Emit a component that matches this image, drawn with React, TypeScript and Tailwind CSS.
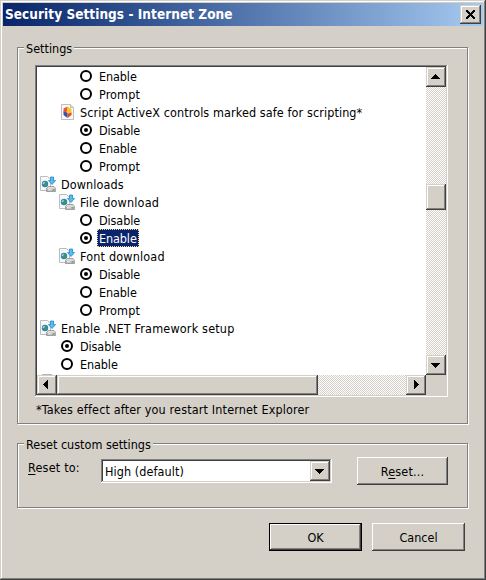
import type { ReactNode } from "react";

const FACE = "bg-[#d4d0c8]";
const RAISED =
  "bg-[#d4d0c8] shadow-[inset_-1px_-1px_0_#404040,inset_1px_1px_0_#d4d0c8,inset_-2px_-2px_0_#808080,inset_2px_2px_0_#fff]";
const BUTTON =
  "bg-[#d4d0c8] shadow-[inset_-1px_-1px_0_#404040,inset_1px_1px_0_#fff,inset_-2px_-2px_0_#808080]";
const SUNKEN =
  "shadow-[inset_-1px_-1px_0_#fff,inset_1px_1px_0_#808080,inset_-2px_-2px_0_#d4d0c8,inset_2px_2px_0_#404040] p-[2px]";
const TRACK =
  "bg-[conic-gradient(#fff_25%,#d4d0c8_0_50%,#fff_0_75%,#d4d0c8_0)] bg-[size:2px_2px]";

type Dir = "up" | "down" | "left" | "right";
const ARROWS: Record<Dir, string> = {
  up: "M9 7h1v1h1v1h1v1h1v1h1v1H5v-1h1v-1h1V9h1V8h1z",
  down: "M5 8h9v1h-1v1h-1v1h-1v1h-1v1H9v-1H8v-1H7v-1H6V9H5z",
  left: "M11 5v9h-1v-1H9v-1H8v-1H7v-1H6V9h1V8h1V7h1V6h1V5z",
  right: "M8 5v9h1v-1h1v-1h1v-1h1v-1h1V9h-1V8h-1V7h-1V6H9V5z",
};

function ArrowButton({ dir }: { dir: Dir }) {
  return (
    <button className={`block size-5 shrink-0 ${RAISED}`} aria-label={dir}>
      <svg width="20" height="20" viewBox="0 0 20 20" shapeRendering="crispEdges">
        <path d={ARROWS[dir]} />
      </svg>
    </button>
  );
}

function Radio({ on }: { on?: boolean }) {
  return (
    <svg className="shrink-0" width="12" height="12" viewBox="0 0 12 12">
      <circle cx="6" cy="6" r="5" fill="#fff" stroke="#000" strokeWidth="2" />
      {on && <circle cx="6" cy="6" r="2" />}
    </svg>
  );
}

function DownloadIcon() {
  return (
    <svg className="shrink-0" width="16" height="16" viewBox="0 0 16 16">
      <path d="M.5.5h7l3 3v11H.5z" fill="#f8f8f8" stroke="#bdbdbd" />
      <circle cx="5" cy="8" r="3.200" fill="#2e7fc4" />
      <path d="M3.500 6.500 6 6l.5 2.500L5 11 4 9zM6.500 8l1.500-.5-.8 2.500z" fill="#3da044" />
      <path d="M2.500 7.200 4.500 5.500 4.800 7 3 8.500z" fill="#a8dcf3" />
      <path d="M10.500 1h3v3.500h2L12 8.500l-3.500-4h2z" fill="#55bdf0" stroke="#2686c5" strokeWidth=".8" />
      <path d="M6.500 12.500 8.500 10.500h5.500l1.500 2v3h-9z" fill="#dedede" stroke="#8a8a8a" strokeWidth=".8" />
      <path d="M7 12.800h8.500v2.200H7z" fill="#b4b5b4" />
      <path d="M8 13.300h3.500v1H8z" fill="#f2f2f2" />
      <path d="M13 13.200h1.500v1.200H13z" fill="#4cb450" />
    </svg>
  );
}

function ActiveXIcon() {
  return (
    <svg className="shrink-0" width="13" height="16" viewBox="0 0 13 16">
      <path d="M.5.5h9l3 3v12H.5z" fill="#fafafa" stroke="#bdbdbd" />
      <path d="M9.500.5v3h3" fill="#e2e2e2" stroke="#bdbdbd" />
      <path d="M6.500 2.500 2.500 4.500v4l4 1z" fill="#e5583a" />
      <path d="m6.500 2.500 4 2.500v4.500l-4 .5-1-2z" fill="#fcc42a" />
      <path d="m2.500 7.500 4 1.500v5l-4-3z" fill="#2d55b8" />
      <path d="m10.500 8.500-4 1.500v4l4-3z" fill="#e2452f" />
    </svg>
  );
}

type Row = {
  text: string;
  level: 0 | 1 | 2;
  kind: "radio" | "on" | "download" | "activex";
  tracking: string;
  selected?: boolean;
};

const TIGHT = "tracking-[-0.1px]";
const MEDIUM = "tracking-[0.1px]";
const WIDE = "tracking-[0.18px]";

const ROWS: Row[] = [
  { text: "Enable", level: 2, kind: "radio", tracking: TIGHT },
  { text: "Prompt", level: 2, kind: "radio", tracking: MEDIUM },
  { text: "Script ActiveX controls marked safe for scripting*", level: 1, kind: "activex", tracking: MEDIUM },
  { text: "Disable", level: 2, kind: "on", tracking: TIGHT },
  { text: "Enable", level: 2, kind: "radio", tracking: TIGHT },
  { text: "Prompt", level: 2, kind: "radio", tracking: MEDIUM },
  { text: "Downloads", level: 0, kind: "download", tracking: MEDIUM },
  { text: "File download", level: 1, kind: "download", tracking: WIDE },
  { text: "Disable", level: 2, kind: "radio", tracking: TIGHT },
  { text: "Enable", level: 2, kind: "on", selected: true, tracking: TIGHT },
  { text: "Font download", level: 1, kind: "download", tracking: WIDE },
  { text: "Disable", level: 2, kind: "on", tracking: TIGHT },
  { text: "Enable", level: 2, kind: "radio", tracking: TIGHT },
  { text: "Prompt", level: 2, kind: "radio", tracking: MEDIUM },
  { text: "Enable .NET Framework setup", level: 0, kind: "download", tracking: WIDE },
  { text: "Disable", level: 1, kind: "on", tracking: TIGHT },
  { text: "Enable", level: 1, kind: "radio", tracking: TIGHT },
];

const INDENT = { 0: "pl-[3px]", 1: "pl-[22px]", 2: "pl-[41px]" };

function TreeRow({ row }: { row: Row }) {
  return (
    <div className={`flex h-[18px] items-center ${INDENT[row.level]}`}>
      <span className="flex w-[19px] shrink-0">
        {row.kind === "download" && <DownloadIcon />}
        {row.kind === "activex" && <span className="pl-[2px]"><ActiveXIcon /></span>}
        {(row.kind === "radio" || row.kind === "on") && (
          <span className="pl-[2px]"><Radio on={row.kind === "on"} /></span>
        )}
      </span>
      <span
        className={`h-[18px] px-[2px] leading-[19px] whitespace-pre ${row.tracking} ${
          row.selected ? "bg-[#0a246a] text-white outline-1 -outline-offset-1 outline-dotted outline-[#f5db95]" : ""
        }`}
      >
        {row.text}
      </span>
    </div>
  );
}

function Group({ title, className, children }: { title: string; className: string; children: ReactNode }) {
  return (
    <section
      className={`border border-[#808080] shadow-[1px_1px_0_#fff,inset_1px_1px_0_#fff] ${className}`}
    >
      <h2 className={`-mt-[8px] ml-[6px] h-4 w-fit pl-[2px] pr-[2px] leading-[17px] whitespace-pre ${FACE}`}>
        {title}
      </h2>
      {children}
    </section>
  );
}

export default function App() {
  return (
    <div className="h-[580px] w-[486px] overflow-hidden bg-[#d4d0c8] p-[3px] font-['DejaVu_Sans_Condensed','DejaVu_Sans',sans-serif] text-[12.5px] text-black shadow-[inset_-1px_-1px_0_#404040,inset_1px_1px_0_#d4d0c8,inset_-2px_-2px_0_#808080,inset_2px_2px_0_#fff]">
      <header className="flex h-[23px] items-center justify-between bg-linear-to-r from-[#0a246a] to-[#a6caf0] pr-[2px] pl-[2px]">
        <h1 className="text-[13.5px] leading-[23px] font-bold tracking-[0.05px] whitespace-pre text-white">
          Security Settings - Internet Zone
        </h1>
        <button className={`h-[19px] w-[21px] ${RAISED}`} aria-label="Close">
          <svg width="21" height="19" viewBox="0 0 21 19" shapeRendering="crispEdges">
            <path d="M6 5h2v1h1v1h1v1h1v-1h1v-1h1v-1h2v2h-1v1h-1v1h-1v1h1v1h1v1h1v2h-2v-1h-1v-1h-1v-1h-1v1h-1v1h-1v1h-2v-2h1v-1h1v-1h1v-1h-1v-1h-1v-1h-1z" />
          </svg>
        </button>
      </header>

      <Group title="Settings" className="mt-[21px] ml-[14px] h-[377px] w-[451px]">
        <div className={`mt-[9px] ml-[17px] h-[332px] w-[413px] ${SUNKEN}`}>
          <div className="flex h-[308px]">
            <div className="h-[308px] w-[389px] overflow-hidden bg-white">
              {ROWS.map((row, i) => (
                <TreeRow key={i} row={row} />
              ))}
              <div className="mt-px ml-[5px] h-px w-[10px] bg-[#b5b5b5]" />
            </div>
            <div className={`flex w-5 flex-col ${TRACK}`}>
              <ArrowButton dir="up" />
              <div className={`mt-[97px] h-[26px] ${RAISED}`} />
              <div className="flex-1" />
              <ArrowButton dir="down" />
            </div>
          </div>
          <div className="flex h-5">
            <div className={`flex w-[389px] ${TRACK}`}>
              <ArrowButton dir="left" />
              <div className={`w-[261px] ${RAISED}`} />
              <div className="flex-1" />
              <ArrowButton dir="right" />
            </div>
            <div className={`w-5 ${FACE}`} />
          </div>
        </div>
        <p className="mt-[4px] ml-[18px] leading-[17px] tracking-[0.15px] whitespace-pre">
          *Takes effect after you restart Internet Explorer
        </p>
      </Group>

      <Group title="Reset custom settings" className="mt-[19px] ml-[14px] h-[65px] w-[451px]">
        <div className="mt-[5px] flex pl-[10px]">
          <label className="mt-[2px] w-[73px] leading-[17px] tracking-[0.2px]">
            <span className="underline underline-offset-2">R</span>eset to:
          </label>
          <div className={`mt-[2px] flex h-[24px] w-[231px] ${SUNKEN}`}>
            <span className="flex-1 bg-white pl-[2px] leading-[21px] tracking-[0.08px]">High (default)</span>
            <ArrowButton dir="down" />
          </div>
          <button className={`ml-[25px] h-[28px] w-[91px] leading-[17px] tracking-[0.15px] ${BUTTON}`}>
            R<span className="underline underline-offset-2">e</span>set...
          </button>
        </div>
      </Group>

      <footer className="mt-[15px] flex gap-[10px] pl-[266px]">
        <button className={`h-[28px] w-[93px] border border-black leading-[17px] ${BUTTON}`}>OK</button>
        <button className={`h-[28px] w-[93px] leading-[17px] ${BUTTON}`}>Cancel</button>
      </footer>
    </div>
  );
}
